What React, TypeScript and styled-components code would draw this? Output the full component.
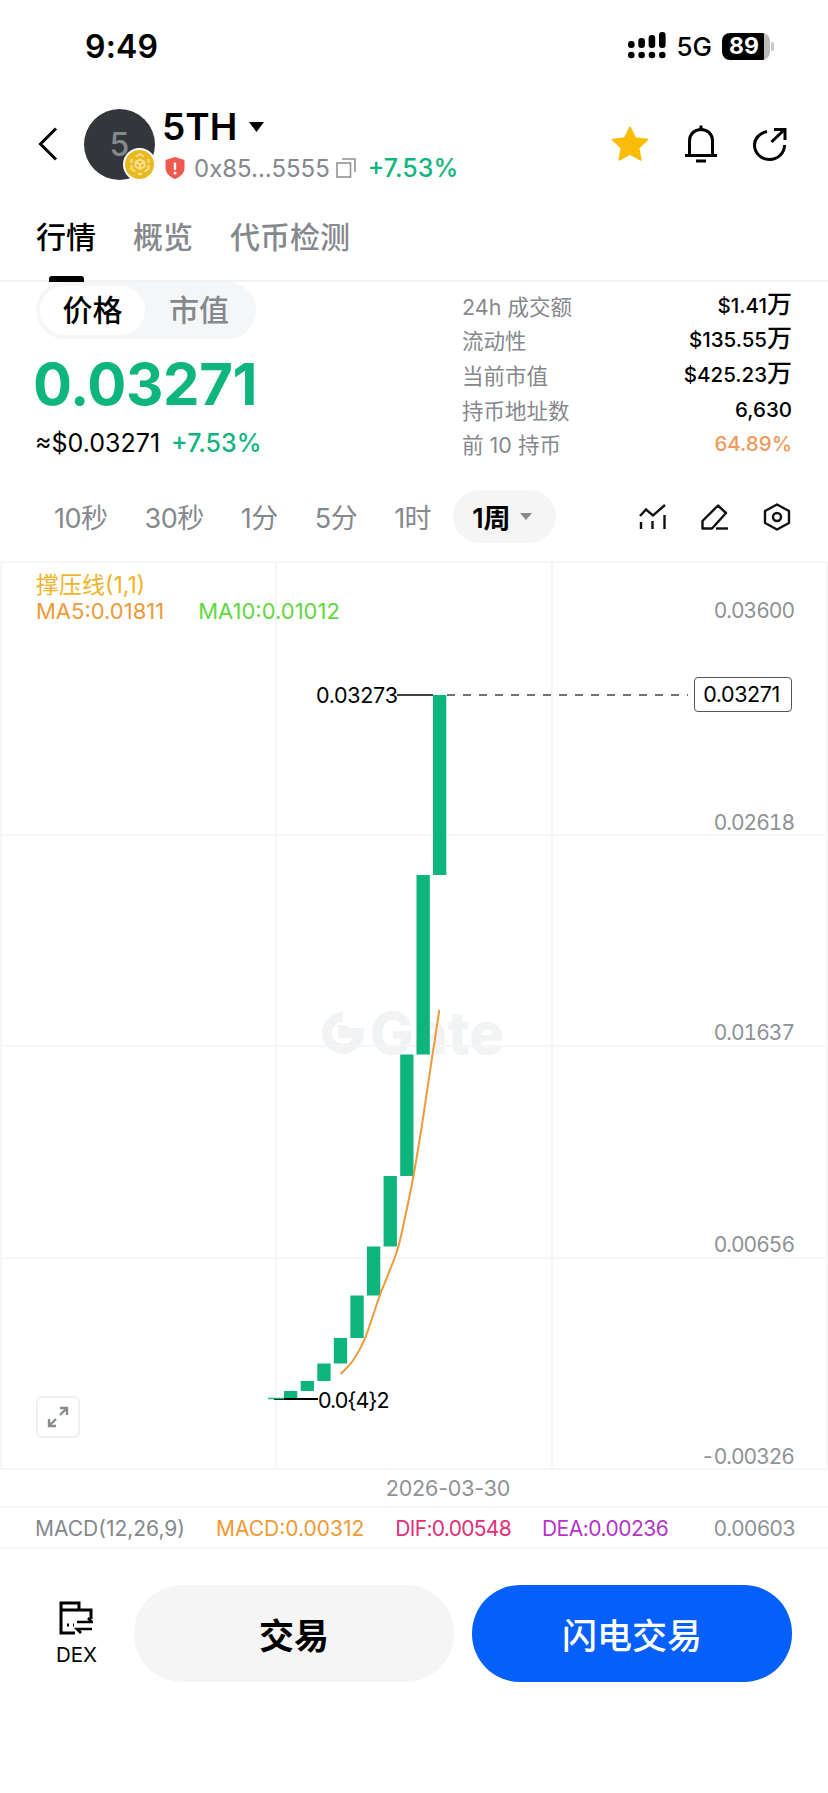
import * as React from 'react';
import { styled, createGlobalStyle } from 'styled-components';

const GlobalStyle = createGlobalStyle`
  html, body {
    margin: 0;
    padding: 0;
    background: #fff;
  }
  * {
    box-sizing: border-box;
  }
`;

const FONT = `Inter, "Noto Sans CJK SC", sans-serif`;
const GREEN = '#0fb57e';
const GRAY = '#85888d';

const Page = styled.div`
  width: 828px;
  height: 1793px;
  background: #fff;
  font-family: ${FONT};
  color: #000;
  overflow: hidden;
`;

/* status bar */
const StatusBar = styled.div`
  height: 92px;
  display: flex;
  align-items: center;
  justify-content: space-between;
  padding: 0 58px 0 85px;
`;

const Clock = styled.div`
  font-size: 32px;
  font-weight: 600;
  letter-spacing: 0.2px;
`;

const StatusRight = styled.div`
  display: flex;
  align-items: center;
  gap: 10px;
`;

const Network = styled.span`
  font-size: 26px;
  font-weight: 500;
`;

const Battery = styled.div`
  position: relative;
  width: 48px;
  height: 27px;
  border-radius: 8px;
  background: linear-gradient(90deg, #000 87%, #bbb 87%);
  color: #fff;
  font-size: 23px;
  font-weight: 700;
  line-height: 27px;
  padding-left: 7px;
  &::after {
    content: '';
    position: absolute;
    right: -4px;
    top: 9px;
    width: 3px;
    height: 9px;
    border-radius: 0 2px 2px 0;
    background: #c8c8c8;
  }
`;

/* header */
const Header = styled.div`
  height: 104px;
  display: flex;
  align-items: center;
  padding: 0 41px 0 38px;
`;

const BackButton = styled.div`
  width: 46px;
  display: flex;
  align-items: center;
`;

const Avatar = styled.div`
  position: relative;
  width: 71px;
  height: 71px;
  border-radius: 50%;
  background: #33363b;
  color: #85888d;
  font-size: 32px;
  font-weight: 500;
  display: flex;
  align-items: center;
  justify-content: center;
`;

const ChainBadge = styled.div`
  position: absolute;
  right: -1px;
  bottom: -1px;
  width: 33px;
  height: 33px;
  border-radius: 50%;
  background: #e8b923;
  border: 2px solid #fff;
  display: flex;
  align-items: center;
  justify-content: center;
`;

const TokenInfo = styled.div`
  margin-left: 7px;
  display: flex;
  flex-direction: column;
  gap: 4px;
  flex: 1;
`;

const TokenName = styled.div`
  display: flex;
  align-items: center;
  gap: 12px;
  font-size: 37px;
  font-weight: 600;
  line-height: 44px;
`;

const TokenMeta = styled.div`
  display: flex;
  align-items: center;
  height: 30px;
  padding-left: 3px;
`;

const Address = styled.span`
  margin-left: 9px;
  font-size: 24px;
  color: ${GRAY};
`;

const Change = styled.span`
  color: ${GREEN};
  font-size: 25px;
  font-weight: 500;
`;

const HeaderActions = styled.div`
  display: flex;
  align-items: center;
  gap: 35px;
`;

/* tabs */
const Tabs = styled.div`
  height: 86px;
  display: flex;
  gap: 37px;
  padding: 21px 0 0 36px;
  border-bottom: 2px solid #f1f2f3;
`;

const Tab = styled.div<{ $active?: boolean }>`
  position: relative;
  height: 40px;
  font-size: 30px;
  font-weight: 500;
  line-height: 40px;
  color: ${(p) => (p.$active ? '#000' : GRAY)};
  ${(p) =>
    p.$active &&
    `&::after {
      content: '';
      position: absolute;
      left: 13px;
      top: 59px;
      width: 35px;
      height: 6px;
      border-radius: 3px 3px 0 0;
      background: #000;
    }`}
`;

/* price block */
const PriceSection = styled.div`
  height: 208px;
  display: flex;
  justify-content: space-between;
  padding: 0 36px 0 36px;
`;

const PriceLeft = styled.div`
  display: flex;
  flex-direction: column;
`;

const Toggle = styled.div`
  width: 220px;
  height: 57px;
  border-radius: 29px;
  background: #f5f6f8;
  display: flex;
  align-items: center;
  padding: 0 4px;
`;

const ToggleItem = styled.div<{ $active?: boolean }>`
  flex: none;
  width: ${(p) => (p.$active ? 105 : 70)}px;
  height: 49px;
  margin-left: ${(p) => (p.$active ? 0 : 19)}px;
  padding-bottom: 5px;
  border-radius: 25px;
  background: ${(p) => (p.$active ? '#fff' : 'transparent')};
  color: ${(p) => (p.$active ? '#000' : GRAY)};
  font-size: 30px;
  font-weight: 500;
  display: flex;
  align-items: center;
  justify-content: center;
`;

const BigPrice = styled.div`
  margin: 10px 0 0 -3px;
  font-size: 58px;
  font-weight: 700;
  line-height: 70px;
  color: ${GREEN};
  letter-spacing: -0.4px;
`;

const SubPrice = styled.div`
  margin: 8px 0 0 -1px;
  display: flex;
  align-items: center;
  gap: 11px;
  font-size: 25px;
  line-height: 32px;
`;

const Stats = styled.div`
  width: 330px;
  padding-top: 6px;
  display: flex;
  flex-direction: column;
`;

const StatRow = styled.div`
  height: 34.6px;
  display: flex;
  align-items: center;
  justify-content: space-between;
`;

const StatLabel = styled.span`
  font-size: 21.5px;
  color: ${GRAY};
`;

const StatValue = styled.span<{ $warn?: boolean }>`
  font-size: 20.5px;
  font-weight: 500;
  color: ${(p) => (p.$warn ? '#ef9a5b' : '#000')};
`;

const StatUnit = styled.span`
  font-size: 25px;
  line-height: 20px;
`;

/* period selector */
const PeriodBar = styled.div`
  height: 53px;
  margin-bottom: 18px;
  display: flex;
  align-items: center;
  padding: 0 37px 0 54px;
`;

const Period = styled.span`
  margin-right: 37px;
  font-size: 27px;
  letter-spacing: -0.5px;
  color: ${GRAY};
`;

const PeriodPill = styled.div`
  width: 103px;
  height: 53px;
  margin-left: -15px;
  border-radius: 27px;
  background: #f5f5f5;
  display: flex;
  align-items: center;
  gap: 9px;
  padding-left: 19px;
  font-size: 27px;
  font-weight: 600;
`;

const PeriodCaret = styled.span`
  width: 0;
  height: 0;
  border-left: 6px solid transparent;
  border-right: 6px solid transparent;
  border-top: 7px solid #8a8a8a;
`;

const ToolIcons = styled.div`
  margin-left: auto;
  display: flex;
  align-items: center;
  gap: 34px;
`;

/* chart */
const Chart = styled.div`
  position: relative;
  height: 909px;
`;

const ChartSvg = styled.svg`
  position: absolute;
  inset: 0;
  display: block;
`;

const Watermark = styled.div`
  position: absolute;
  left: 322px;
  top: 450px;
  display: flex;
  align-items: center;
  gap: 6px;
  font-size: 58px;
  font-weight: 800;
  line-height: 44px;
  color: #f1f3f4;
`;

const Legend = styled.div`
  position: absolute;
  left: 36px;
  top: 11px;
  line-height: 26px;
`;

const LegendTitle = styled.div`
  font-size: 23px;
  color: #f0b429;
`;

const LegendRow = styled.div`
  display: flex;
  gap: 34px;
  font-size: 22px;
`;

const LegendValue = styled.span<{ $color: string }>`
  color: ${(p) => p.$color};
`;

const AxisValue = styled.div<{ $y: number }>`
  position: absolute;
  right: 34px;
  top: ${(p) => p.$y - 561 - 13}px;
  font-size: 21px;
  font-variant-numeric: tabular-nums;
  line-height: 26px;
  letter-spacing: -1px;
  color: #8f9296;
`;

const PriceTag = styled.div`
  position: absolute;
  left: 694px;
  top: 116px;
  width: 98px;
  height: 35px;
  padding-right: 3px;
  border: 1px solid #555;
  border-radius: 4px;
  background: #fff;
  font-size: 21.5px;
  line-height: 33px;
  letter-spacing: -0.4px;
  text-align: center;
`;

const MarkLabel = styled.div<{ $x: number; $y: number; $spacing: number }>`
  position: absolute;
  left: ${(p) => p.$x}px;
  top: ${(p) => p.$y - 561 - 13}px;
  font-size: 21.5px;
  line-height: 26px;
  letter-spacing: ${(p) => p.$spacing}px;
  color: #000;
`;

const ExpandButton = styled.div`
  position: absolute;
  left: 36px;
  top: 835px;
  width: 44px;
  height: 42px;
  border: 2px solid #f0f0f0;
  border-radius: 6px;
  background: #fff;
  display: flex;
  align-items: center;
  justify-content: center;
`;

const DateRow = styled.div`
  height: 36px;
  display: flex;
  align-items: center;
  justify-content: center;
  padding-left: 68px;
  font-size: 21.5px;
  letter-spacing: -0.2px;
  color: #8f9296;
`;

const MacdRow = styled.div`
  height: 43px;
  padding: 2px 33px 0 35px;
  border-top: 2px solid #f5f6f7;
  border-bottom: 2px solid #f5f6f7;
  display: flex;
  align-items: center;
  gap: 31px;
  font-size: 21px;
`;

const MacdValue = styled.span<{ $color: string; $spacing?: number; $end?: boolean }>`
  color: ${(p) => p.$color};
  letter-spacing: ${(p) => p.$spacing ?? 0}px;
  margin-left: ${(p) => (p.$end ? 'auto' : 0)};
`;

/* bottom actions */
const ActionBar = styled.div`
  height: 97px;
  margin-top: 36px;
  display: flex;
  align-items: center;
  padding: 0 36px 0 56px;
`;

const DexButton = styled.div`
  width: 78px;
  display: flex;
  flex-direction: column;
  align-items: flex-start;
  gap: 8px;
  font-size: 20.5px;
  line-height: 24px;
`;

const DexIcon = styled.svg`
  margin-left: 3px;
`;

const TradeButton = styled.div<{ $primary?: boolean }>`
  width: 320px;
  height: 97px;
  margin-left: ${(p) => (p.$primary ? 18 : 0)}px;
  border-radius: 48px;
  background: ${(p) => (p.$primary ? '#0560fb' : '#f5f5f5')};
  color: ${(p) => (p.$primary ? '#fff' : '#000')};
  font-size: 35px;
  font-weight: ${(p) => (p.$primary ? 500 : 700)};
  display: flex;
  align-items: center;
  justify-content: center;
`;

const stats = [
  { label: '24h 成交额', value: '$1.41', unit: '万' },
  { label: '流动性', value: '$135.55', unit: '万' },
  { label: '当前市值', value: '$425.23', unit: '万' },
  { label: '持币地址数', value: '6,630' },
  { label: '前 10 持币', value: '64.89%', warn: true },
];

const periods = ['10秒', '30秒', '1分', '5分', '1时'];

const axisValues = [
  { y: 611, text: '0.03600' },
  { y: 823, text: '0.02618' },
  { y: 1033, text: '0.01637' },
  { y: 1245, text: '0.00656' },
  { y: 1457, text: '-0.00326' },
];

// x, top, bottom of every candle in page pixels
const candles = [
  [284, 1391, 1398],
  [300.7, 1381, 1391],
  [317.3, 1363.5, 1381],
  [333.8, 1338, 1363.5],
  [350.4, 1295.5, 1338],
  [367, 1246.5, 1295.5],
  [383.6, 1176, 1246.5],
  [400.2, 1054.5, 1176],
  [416.5, 875, 1054.5],
  [433, 695, 875],
];

const maPoints = [
  [340.7, 1374],
  [353.3, 1360],
  [365, 1338.3],
  [380, 1295],
  [396.7, 1252],
  [404, 1222],
  [413.3, 1176.7],
  [421.7, 1126.7],
  [430.7, 1066.7],
  [439.3, 1010],
];

// catmull-rom through the points, so the average line has no corners
const smoothPath = (pts: number[][]) =>
  pts.reduce((d, [x, y], i) => {
    if (i === 0) return `M${x} ${y}`;
    const p0 = pts[Math.max(i - 2, 0)];
    const p1 = pts[i - 1];
    const p3 = pts[Math.min(i + 1, pts.length - 1)];
    const c1x = p1[0] + (x - p0[0]) / 6;
    const c1y = p1[1] + (y - p0[1]) / 6;
    const c2x = x - (p3[0] - p1[0]) / 6;
    const c2y = y - (p3[1] - p1[1]) / 6;
    return `${d} C${c1x} ${c1y} ${c2x} ${c2y} ${x} ${y}`;
  }, '');

const Candles = () => (
  <>
    {candles.map(([x, top, bottom]) => (
      <rect key={x} x={x} y={top} width={13.3} height={bottom - top} fill="#0db57c" />
    ))}
  </>
);

const SignalIcon = () => (
  <svg width="38" height="28" viewBox="0 0 38 28" fill="#000">
    {[0, 10.3, 20.6, 31].map((x) => (
      <circle key={x} cx={x + 3.3} cy={23} r={3.3} />
    ))}
    <rect x="0" y="9" width="6.6" height="7" rx="3" />
    <rect x="10.3" y="6" width="6.6" height="10" rx="3" />
    <rect x="20.6" y="3" width="6.6" height="13" rx="3" />
    <rect x="31" y="0" width="6.6" height="16" rx="3" />
  </svg>
);

const ChevronLeft = () => (
  <svg width="20" height="34" viewBox="0 0 20 34" fill="none" stroke="#000" strokeWidth="3">
    <path d="M18 1.5 L2.5 17 L18 32.5" />
  </svg>
);

const BnbMark = () => (
  <svg width="24" height="24" viewBox="0 0 24 24" fill="none" stroke="#f7e08a" strokeWidth="2">
    <path d="M12 2 L16 4.3 M12 2 L8 4.3 M3.5 7 L3.5 11 M20.5 7 L20.5 11 M3.5 13 L3.5 17 L7.5 19.5 M20.5 13 L20.5 17 L16.5 19.5 M10 21 L12 22.5 L14 21" />
    <path d="M12 7.5 L16.5 10 L16.5 14.5 L12 17 L7.5 14.5 L7.5 10 Z M7.5 10 L12 12.5 L16.5 10 M12 12.5 L12 17" />
  </svg>
);

const Caret = () => (
  <svg width="15" height="10" viewBox="0 0 15 10" fill="#000">
    <path d="M0 0 H15 L7.5 10 Z" />
  </svg>
);

const ShieldIcon = () => (
  <svg width="20" height="22" viewBox="0 0 20 22">
    <path d="M10 0 L19.5 3 V11 C19.5 16.5 15 20 10 22 C5 20 0.5 16.5 0.5 11 V3 Z" fill="#ee5a50" />
    <rect x="8.8" y="5.5" width="2.4" height="7.5" rx="1" fill="#fff" />
    <circle cx="10" cy="16" r="1.5" fill="#fff" />
  </svg>
);

const CopyWrap = styled.svg`
  margin: 0 12px 0 6px;
`;

const CopyIcon = () => (
  <CopyWrap width="20" height="20" viewBox="0 0 20 20" fill="none" stroke="#8f9296" strokeWidth="1.6">
    <rect x="1" y="5" width="13.5" height="14" />
    <path d="M6 1 H19 V14" />
  </CopyWrap>
);

const StarIcon = () => (
  <svg width="38" height="36" viewBox="0 0 38 36">
    <path
      d="M19 1 L24.3 12 L36.5 13.6 L27.6 22 L29.9 34 L19 28.2 L8.1 34 L10.4 22 L1.5 13.6 L13.7 12 Z"
      fill="#fbbc05"
      stroke="#fbbc05"
      strokeWidth="1.5"
      strokeLinejoin="round"
    />
  </svg>
);

const BellIcon = () => (
  <svg width="34" height="38" viewBox="0 0 34 38" fill="none" stroke="#000" strokeWidth="3">
    <path d="M1 30.5 H33" />
    <path d="M5.5 30.5 V16 C5.5 9 10.5 4.5 17 4.5 C23.5 4.5 28.5 9 28.5 16 V30.5" />
    <path d="M17 0.5 V4.5 M12 36 H22" />
  </svg>
);

const ShareIcon = () => (
  <svg width="34" height="34" viewBox="0 0 34 34" fill="none" stroke="#000" strokeWidth="3">
    <path d="M14 4.5 C6.5 6 1.5 11.5 1.5 18 C1.5 26 8 32.5 16.5 32.5 C25 32.5 31.5 26 31.5 18" />
    <path d="M18.5 15 L31 3 M21 2.5 H32 V13" />
  </svg>
);

const IndicatorIcon = () => (
  <svg width="28" height="26" viewBox="0 0 28 26" fill="none" stroke="#111" strokeWidth="2.4">
    <path d="M1 12 L7 5.5 L14 11.5 L26 1" />
    <path d="M2 18 V25 M13.5 17 V25 M25.5 11 V25" />
  </svg>
);

const PenIcon = () => (
  <svg width="28" height="26" viewBox="0 0 28 26" fill="none" stroke="#111" strokeWidth="2.4" strokeLinejoin="round">
    <path d="M1.5 17 L17 1.5 L25 9 L11 24.5 H1.5 Z" />
    <path d="M15 24.5 H27" />
  </svg>
);

const HexIcon = () => (
  <svg width="28" height="28" viewBox="0 0 28 28" fill="none" stroke="#111" strokeWidth="2.4" strokeLinejoin="round">
    <path d="M14 1.5 L26 8 V20 L14 26.5 L2 20 V8 Z" />
    <circle cx="14" cy="14" r="4" />
  </svg>
);

const ExpandIcon = () => (
  <svg width="22" height="22" viewBox="0 0 22 22" fill="none" stroke="#8a8d90" strokeWidth="2.4">
    <path d="M13 2 H20 V9 M20 2 L13 9 M2 13 V20 H9 M2 20 L9 13" />
  </svg>
);

const GateMark = () => (
  <svg width="42" height="42" viewBox="0 0 42 42" fill="none">
    <path d="M21 5 A16 16 0 1 0 37 21 H21 V13" stroke="#f1f3f4" strokeWidth="10" />
  </svg>
);

export default function App() {
  return (
    <Page>
      <GlobalStyle />
      <StatusBar>
        <Clock>9:49</Clock>
        <StatusRight>
          <SignalIcon />
          <Network>5G</Network>
          <Battery>89</Battery>
        </StatusRight>
      </StatusBar>

      <Header>
        <BackButton>
          <ChevronLeft />
        </BackButton>
        <Avatar>
          5
          <ChainBadge>
            <BnbMark />
          </ChainBadge>
        </Avatar>
        <TokenInfo>
          <TokenName>
            5TH
            <Caret />
          </TokenName>
          <TokenMeta>
            <ShieldIcon />
            <Address>0x85...5555</Address>
            <CopyIcon />
            <Change>+7.53%</Change>
          </TokenMeta>
        </TokenInfo>
        <HeaderActions>
          <StarIcon />
          <BellIcon />
          <ShareIcon />
        </HeaderActions>
      </Header>

      <Tabs>
        <Tab $active>行情</Tab>
        <Tab>概览</Tab>
        <Tab>代币检测</Tab>
      </Tabs>

      <PriceSection>
        <PriceLeft>
          <Toggle>
            <ToggleItem $active>价格</ToggleItem>
            <ToggleItem>市值</ToggleItem>
          </Toggle>
          <BigPrice>0.03271</BigPrice>
          <SubPrice>
            <span>≈$0.03271</span>
            <Change>+7.53%</Change>
          </SubPrice>
        </PriceLeft>
        <Stats>
          {stats.map((s) => (
            <StatRow key={s.label}>
              <StatLabel>{s.label}</StatLabel>
              <StatValue $warn={s.warn}>
                {s.value}
                {s.unit && <StatUnit>{s.unit}</StatUnit>}
              </StatValue>
            </StatRow>
          ))}
        </Stats>
      </PriceSection>

      <PeriodBar>
        {periods.map((p) => (
          <Period key={p}>{p}</Period>
        ))}
        <PeriodPill>
          1周
          <PeriodCaret />
        </PeriodPill>
        <ToolIcons>
          <IndicatorIcon />
          <PenIcon />
          <HexIcon />
        </ToolIcons>
      </PeriodBar>

      <Chart>
        <Watermark>
          <GateMark />
          Gate
        </Watermark>
        <ChartSvg width="828" height="909" viewBox="0 561 828 909">
          <g stroke="#f5f6f7" strokeWidth="2" fill="none">
            <path d="M0 562 H828 M0 835 H828 M0 1046 H828 M0 1258 H828 M0 1469 H828" />
            <path d="M1 561 V1470 M276 561 V1470 M552 561 V1470 M827 561 V1470" />
          </g>
          <Candles />
          <path d={smoothPath(maPoints)} fill="none" stroke="#ee9a3a" strokeWidth="2" />
          <path d="M397 695 H433" stroke="#000" strokeWidth="1.5" />
          <path d="M447 695 H688" stroke="#444" strokeWidth="1.5" strokeDasharray="8 8" />
          <path d="M274 1399 H318" stroke="#000" strokeWidth="2" />
          <path d="M268 1398.5 H284" stroke="#0db57c" strokeWidth="1.5" />
        </ChartSvg>
        <Legend>
          <LegendTitle>撑压线(1,1)</LegendTitle>
          <LegendRow>
            <LegendValue $color="#ee9a3a">MA5:0.01811</LegendValue>
            <LegendValue $color="#5fd83e">MA10:0.01012</LegendValue>
          </LegendRow>
        </Legend>
        {axisValues.map((a) => (
          <AxisValue key={a.y} $y={a.y}>
            {a.text}
          </AxisValue>
        ))}
        <PriceTag>0.03271</PriceTag>
        <MarkLabel $x={316} $y={695} $spacing={-0.3}>
          0.03273
        </MarkLabel>
        <MarkLabel $x={318} $y={1400} $spacing={-1}>
          0.0{'{'}4{'}'}2
        </MarkLabel>
        <ExpandButton>
          <ExpandIcon />
        </ExpandButton>
      </Chart>

      <DateRow>2026-03-30</DateRow>

      <MacdRow>
        <MacdValue $color="#85888d">MACD(12,26,9)</MacdValue>
        <MacdValue $color="#ef9a33">MACD:0.00312</MacdValue>
        <MacdValue $color="#e0307a" $spacing={-0.7}>DIF:0.00548</MacdValue>
        <MacdValue $color="#b534c8" $spacing={-0.5}>DEA:0.00236</MacdValue>
        <MacdValue $color="#8f9296" $spacing={-0.4} $end>0.00603</MacdValue>
      </MacdRow>

      <ActionBar>
        <DexButton>
          <DexIcon width="34" height="34" viewBox="0 0 34 34" fill="none" stroke="#000" strokeWidth="3">
            <path d="M16 32 H2 V2 H20 V9 M2 9 H32 V18" />
            <path d="M8 24 H10 M14 24 H15" />
            <path d="M18 21 H33 L29 17 M33 28 H18 L22 32" strokeWidth="2.6" />
          </DexIcon>
          DEX
        </DexButton>
        <TradeButton>交易</TradeButton>
        <TradeButton $primary>闪电交易</TradeButton>
      </ActionBar>
    </Page>
  );
}
